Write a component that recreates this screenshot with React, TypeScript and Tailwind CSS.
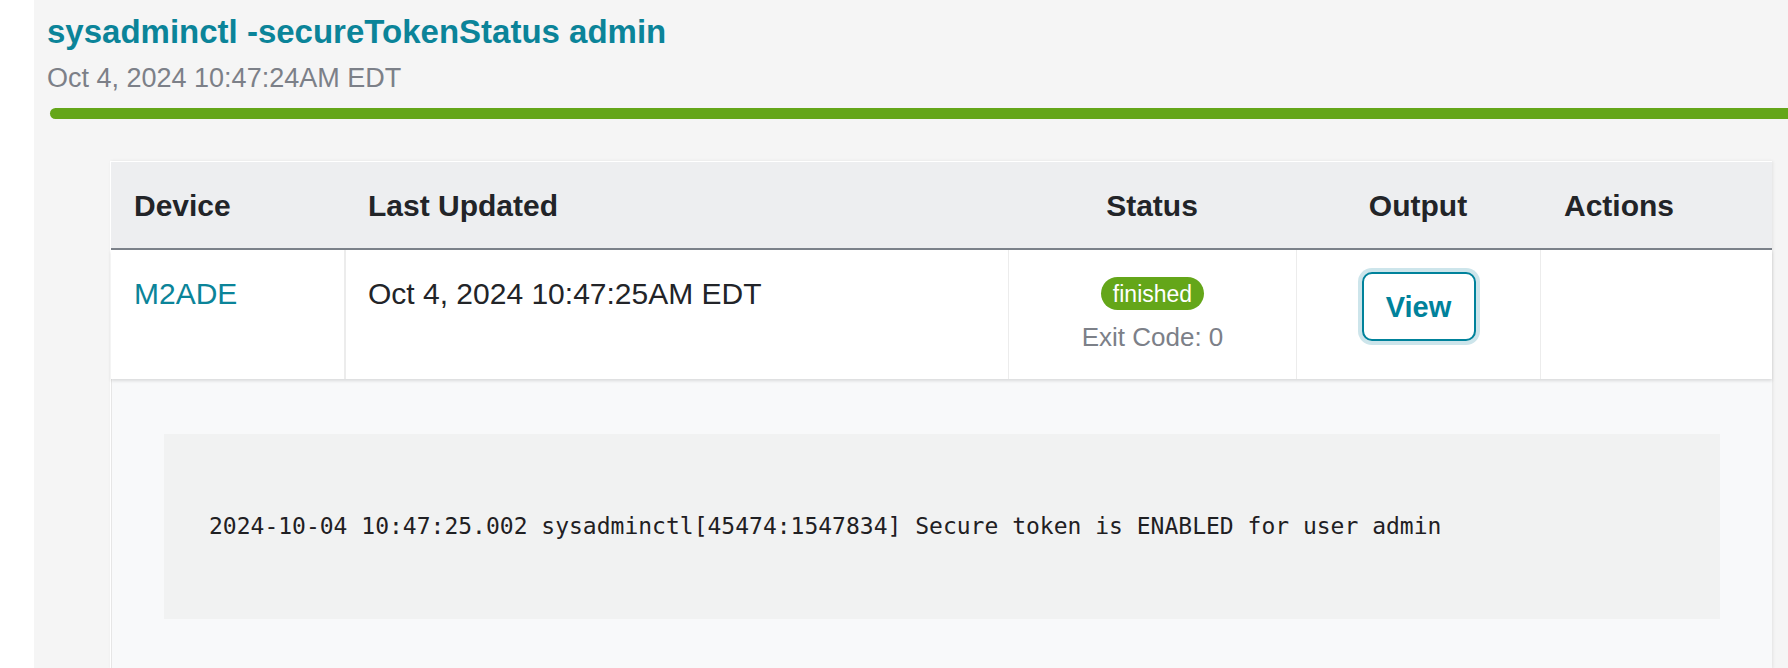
import React from 'react';

const sans = { fontFamily: '"Liberation Sans", Arial, Helvetica, sans-serif' };

const logLine = '2024-10-04 10:47:25.002 sysadminctl[45474:1547834] Secure token is ENABLED for user admin';

const App: React.FC = () => {
    return (
        <div className="flex min-h-[668px] w-full overflow-hidden bg-white" style={sans}>
            <div className="w-[34px] shrink-0 bg-white" />
            <div className="flex-1 bg-[#f5f5f5] pt-[13px]">
                <h1 className="ml-[13px] text-[33px] leading-[38px] font-bold text-[#0b8499]">
                    sysadminctl -secureTokenStatus admin
                </h1>
                <p className="ml-[13px] mt-[11px] text-[27px] leading-[32px] text-[#7c8088]">
                    Oct 4, 2024 10:47:24AM EDT
                </p>
                <div className="ml-[16px] mt-[14px] h-[11px] rounded-l-full bg-[#64a619]" />

                <div className="ml-[76px] mr-[16px] mt-[42px] border-t border-l border-white bg-white shadow-[1px_0_3px_rgba(0,0,0,0.08)]">
                    {/* header */}
                    <div className="grid grid-cols-[233px_664px_288px_244px_1fr] h-[88px] items-center border-b-2 border-[#7c828a] bg-[#edeef0] text-[30px] font-bold text-[#222428]">
                        <div className="pl-[23px]">Device</div>
                        <div className="pl-[24px]">Last Updated</div>
                        <div className="text-center">Status</div>
                        <div className="text-center">Output</div>
                        <div className="pl-[24px]">Actions</div>
                    </div>

                    {/* row */}
                    <div className="relative z-10 grid grid-cols-[233px_664px_288px_244px_1fr] h-[129px] bg-white shadow-[0_2px_3px_rgba(0,0,0,0.12)] text-[30px] leading-[36px]">
                        <div className="pl-[23px] pt-[26px] text-[#0b8499]">M2ADE</div>
                        <div className="border-l-2 border-[#ececec] pl-[22px] pt-[26px] text-[#222428]">
                            Oct 4, 2024 10:47:25AM EDT
                        </div>
                        <div className="flex flex-col items-center border-l border-[#ececec] pt-[27px]">
                            <span className="flex h-[33px] items-center rounded-full bg-[#64a619] px-[12px] text-[23px] text-white">
                                finished
                            </span>
                            <span className="mt-[12px] text-[26px] leading-[31px] text-[#7c8088]">Exit Code: 0</span>
                        </div>
                        <div className="flex justify-center border-l border-[#ececec] pt-[22px]">
                            <button className="h-[69px] w-[114px] rounded-[10px] border-2 border-[#00829b] bg-white text-[29px] font-bold text-[#00829b] ring-4 ring-[#cde5eb]">
                                View
                            </button>
                        </div>
                        <div className="border-l border-[#ececec]" />
                    </div>

                    {/* expanded output */}
                    <div className="border-l border-[#e6e6e6] bg-[#f8f9fa] px-[52px] pt-[55px] pb-[50px]">
                        <div className="flex h-[185px] items-center bg-[#f1f2f2] pl-[45px]">
                            <pre className="text-[23px] text-[#1f2023]" style={{ fontFamily: '"DejaVu Sans Mono", Menlo, monospace' }}>
                                {logLine}
                            </pre>
                        </div>
                    </div>
                </div>
            </div>
        </div>
    );
};

export default App;
